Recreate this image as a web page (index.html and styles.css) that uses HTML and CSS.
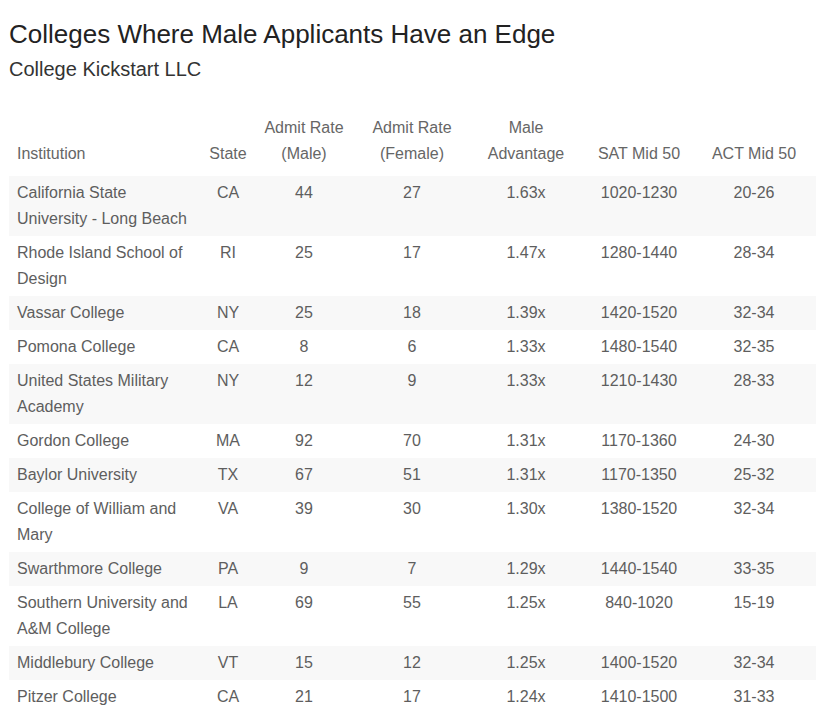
FILE: index.html
```html
<!DOCTYPE html>
<html>
<head>
<meta charset="utf-8">
<link rel="stylesheet" href="styles.css">
</head>
<body>
<div class="page">
  <h1 class="title">Colleges Where Male Applicants Have an Edge</h1>
  <p class="subtitle">College Kickstart LLC</p>
  <table class="data">
    <colgroup>
      <col class="c-inst"><col class="c-state"><col class="c-male"><col class="c-female"><col class="c-adv"><col class="c-sat"><col class="c-act">
    </colgroup>
    <thead>
      <tr>
        <th class="left">Institution</th>
        <th class="narrow">State</th>
        <th>Admit Rate (Male)</th>
        <th>Admit Rate (Female)</th>
        <th>Male Advantage</th>
        <th>SAT Mid 50</th>
        <th>ACT Mid 50</th>
      </tr>
    </thead>
    <tbody>
      <tr><td class="left">California State University - Long Beach</td><td>CA</td><td>44</td><td>27</td><td>1.63x</td><td>1020-1230</td><td>20-26</td></tr>
      <tr><td class="left">Rhode Island School of Design</td><td>RI</td><td>25</td><td>17</td><td>1.47x</td><td>1280-1440</td><td>28-34</td></tr>
      <tr><td class="left">Vassar College</td><td>NY</td><td>25</td><td>18</td><td>1.39x</td><td>1420-1520</td><td>32-34</td></tr>
      <tr><td class="left">Pomona College</td><td>CA</td><td>8</td><td>6</td><td>1.33x</td><td>1480-1540</td><td>32-35</td></tr>
      <tr><td class="left">United States Military Academy</td><td>NY</td><td>12</td><td>9</td><td>1.33x</td><td>1210-1430</td><td>28-33</td></tr>
      <tr><td class="left">Gordon College</td><td>MA</td><td>92</td><td>70</td><td>1.31x</td><td>1170-1360</td><td>24-30</td></tr>
      <tr><td class="left">Baylor University</td><td>TX</td><td>67</td><td>51</td><td>1.31x</td><td>1170-1350</td><td>25-32</td></tr>
      <tr><td class="left">College of William and Mary</td><td>VA</td><td>39</td><td>30</td><td>1.30x</td><td>1380-1520</td><td>32-34</td></tr>
      <tr><td class="left">Swarthmore College</td><td>PA</td><td>9</td><td>7</td><td>1.29x</td><td>1440-1540</td><td>33-35</td></tr>
      <tr><td class="left">Southern University and A&amp;M College</td><td>LA</td><td>69</td><td>55</td><td>1.25x</td><td>840-1020</td><td>15-19</td></tr>
      <tr><td class="left">Middlebury College</td><td>VT</td><td>15</td><td>12</td><td>1.25x</td><td>1400-1520</td><td>32-34</td></tr>
      <tr><td class="left">Pitzer College</td><td>CA</td><td>21</td><td>17</td><td>1.24x</td><td>1410-1500</td><td>31-33</td></tr>
    </tbody>
  </table>
</div>
</body>
</html>
```

FILE: styles.css
```css
html, body {
  margin: 0;
  padding: 0;
  background: #ffffff;
}

.page {
  padding: 19px 0 0 9px;
  font-family: "Liberation Sans", Arial, sans-serif;
}

.title {
  margin: 0;
  font-size: 26px;
  font-weight: normal;
  line-height: 30px;
  color: #222222;
}

.subtitle {
  margin: 7px 0 0 0;
  font-size: 20px;
  line-height: 26px;
  color: #333333;
}

.data {
  margin-top: 29px;
  width: 807px;
  table-layout: fixed;
  border-collapse: collapse;
  font-size: 16px;
  line-height: 26px;
  color: #5e5e5e;
}

.c-inst { width: 197px; }
.c-state { width: 44px; }
.c-male { width: 108px; }
.c-female { width: 108px; }
.c-adv { width: 120px; }
.c-sat { width: 106px; }
.c-act { width: 124px; }

.data th {
  font-weight: normal;
  vertical-align: bottom;
  text-align: center;
  padding: 4px 8px 9px 8px;
  color: #666666;
}

.data th.narrow {
  padding-left: 0;
  padding-right: 0;
}

.data td {
  vertical-align: top;
  text-align: center;
  padding: 4px 8px;
}

.data .left {
  text-align: left;
}

.data tbody tr:nth-child(odd) {
  background: #f8f8f8;
}
```
